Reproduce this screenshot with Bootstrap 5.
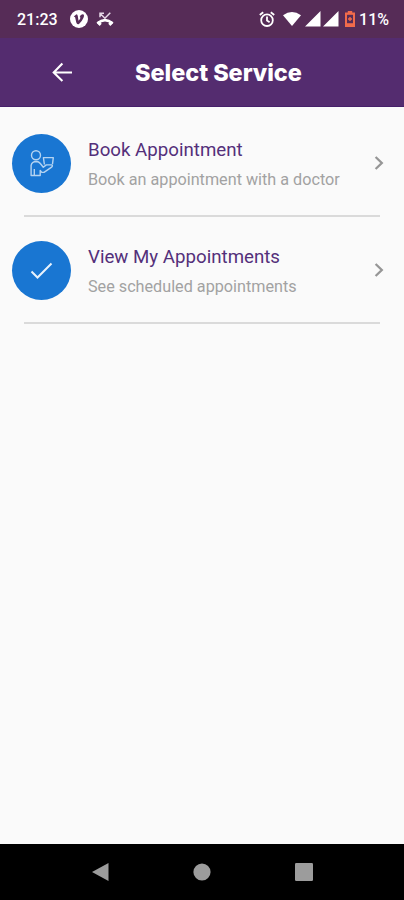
<!DOCTYPE html>
<html lang="en">
<head>
<meta charset="utf-8">
<meta name="viewport" content="width=device-width, initial-scale=1">
<title>Select Service</title>
<link href="https://cdn.jsdelivr.net/npm/bootstrap@5.3.0/dist/css/bootstrap.min.css" rel="stylesheet">
<style>
  body { font-family: Roboto, "Liberation Sans", sans-serif; background: #fafafa; }
  svg { display: block; flex: none; }
  .status-bar { height: 38px; background: #562c57; padding: 0 15px 0 17px; font-size: 16px; font-weight: 500; line-height: 38px; }
  .clock { width: 53px; }
  .clock, .charge { padding-top: 1px; }
  .wifi { margin-left: 8px; }
  .signal { margin-left: 4px; }
  .battery { margin: 0 4px 0 6px; }
  .app-header { height: 69px; background: #542c6f; border-bottom: 1px solid #46206a; padding-left: 51px; }
  .app-title { font-family: Inter, sans-serif; font-weight: 800; font-size: 23.5px; line-height: 30px; margin-left: 62px; padding-top: 1px; letter-spacing: -.05px; }
  .service { height: 107px; padding: 27px 19px 0 12px; color: inherit; }
  .service-icon { width: 59px; height: 59px; background: #1976d2; }
  .service-text { margin-left: 17px; }
  .service-name { font-size: 18.7px; line-height: 24px; color: #54307a; margin-top: 4px; }
  .service-note { font-size: 16.2px; line-height: 22px; color: #a2a2a2; margin-top: 7px; }
  .chevron { margin-bottom: 2px; }
  .service-line { height: 2px; margin: 22px 5px 0 12px; background: #dadada; }
  .system-nav { height: 56px; background: #000; padding: 0 91px; }
</style>
</head>
<body>
<div class="d-flex flex-column vh-100 overflow-hidden">
  <div class="status-bar d-flex align-items-center text-white">
    <span class="clock">21:23</span>
    <svg width="18" height="18" viewBox="0 0 18 18"><circle cx="9" cy="9" r="9" fill="#fff"/><path d="M3.8 6.4 6.2 4.4Q7.4 4 7.8 6l.7 4.7Q10.6 8.8 10.4 7.4L9.7 7.1Q10.4 4.2 12.8 4.3q2 .4.7 3.4-1.7 4-4.5 6.2-2 1-2.7-1.3L5.1 7.2Z" fill="#562c57"/></svg>
    <svg class="ms-2" width="18" height="16" viewBox="0 0 18 16" fill="none" stroke="#fff"><path d="M1.4 12.4Q9 5.9 16.6 12.4" stroke-width="2.8"/><path d="M1.8 11 4.7 13.8M13.3 13.8 16.2 11" stroke-width="3"/><path d="m4.2 2.5 4.7 4.8 5.4-5.5M4 6.2V2.3H8" stroke-width="1.5" stroke="#e6d8e7"/></svg>
    <div class="d-flex align-items-center ms-auto">
      <svg width="16" height="17" viewBox="0 0 16 17" fill="none" stroke="#fff" stroke-width="1.8"><circle cx="8" cy="9.2" r="5.8"/><path d="M8 5.5v4l2.6 1.7M.8 4 4.2 1.2M15.2 4l-3.4-2.8"/></svg>
      <svg class="wifi" width="18" height="16" viewBox="0 0 18 16"><path d="M0 4.2Q9-2.4 18 4.2L9 15Z" fill="#fff"/></svg>
      <svg class="signal" width="34" height="16" viewBox="0 0 34 16" fill="#fff"><path d="M0 15.5 15.5 0v15.5ZM18 15.5 33.5 0v15.5Z"/></svg>
      <svg class="battery" width="10" height="16" viewBox="0 0 10 16"><path d="M2.8 0h4.4v1.6H10V16H0V1.6h2.8Z" fill="#f26b4b"/><path d="M2 3.8h6v8.4H2Z" fill="#562c57"/><path d="M3 8h4M5 6v4" stroke="#f26b4b" stroke-width="1.4"/></svg>
      <span class="charge">11%</span>
    </div>
  </div>

  <header class="app-header d-flex align-items-center text-white">
    <svg width="22" height="20" viewBox="0 0 22 20" fill="none" stroke="#fff" stroke-width="2.1"><path d="M21 10.5H3.5M11.4 1.5 2.7 10.5l8.7 8.5"/></svg>
    <h1 class="app-title mb-0">Select Service</h1>
  </header>

  <main class="flex-grow-1">
    <a href="#" class="service d-block text-decoration-none">
      <div class="d-flex">
        <div class="service-icon rounded-circle d-flex align-items-center justify-content-center flex-shrink-0">
          <svg width="27" height="29" viewBox="0 0 27 29" fill="none" stroke="#b4d3f1" stroke-width="1.4" stroke-linejoin="round"><circle cx="8" cy="6.2" r="4.5"/><path d="M3.1 26.5V16.3q.8-3.7 5.2-3.8 2.5 0 4 2l3 3.8 3-2.4h5.5q1.3.9-.2 2.2l-7.6 5.3h-2.2L12.2 21.5v5ZM6.3 26.5v-6.5M16.4 15.5 15.4 8.6h9.9l-.8 6.6"/></svg>
        </div>
        <div class="service-text">
          <div class="service-name">Book Appointment</div>
          <div class="service-note">Book an appointment with a doctor</div>
        </div>
        <svg class="chevron ms-auto align-self-center" width="12" height="16" viewBox="0 0 12 16" fill="none" stroke="#969696" stroke-width="2.3"><path d="m2.6 2 6.2 6-6.2 6"/></svg>
      </div>
      <div class="service-line"></div>
    </a>
    <a href="#" class="service d-block text-decoration-none">
      <div class="d-flex">
        <div class="service-icon rounded-circle d-flex align-items-center justify-content-center flex-shrink-0">
          <svg width="23" height="18" viewBox="0 0 23 18" fill="none" stroke="#e8f2fc" stroke-width="2"><path d="m1.5 9.5 6 6L21.5 1.5"/></svg>
        </div>
        <div class="service-text">
          <div class="service-name">View My Appointments</div>
          <div class="service-note">See scheduled appointments</div>
        </div>
        <svg class="chevron ms-auto align-self-center" width="12" height="16" viewBox="0 0 12 16" fill="none" stroke="#969696" stroke-width="2.3"><path d="m2.6 2 6.2 6-6.2 6"/></svg>
      </div>
      <div class="service-line"></div>
    </a>
  </main>

  <nav class="system-nav d-flex align-items-center justify-content-between">
    <svg width="18" height="20" viewBox="0 0 18 20"><path d="M1 10 17.5 1v18Z" fill="#9c9c9c"/></svg>
    <svg width="18" height="18" viewBox="0 0 18 18"><circle cx="9" cy="9" r="8.6" fill="#9c9c9c"/></svg>
    <svg width="18" height="18" viewBox="0 0 18 18"><rect width="18" height="18" rx="1.2" fill="#9c9c9c"/></svg>
  </nav>
</div>
<script src="https://cdn.jsdelivr.net/npm/bootstrap@5.3.0/dist/js/bootstrap.bundle.min.js"></script>
</body>
</html>
